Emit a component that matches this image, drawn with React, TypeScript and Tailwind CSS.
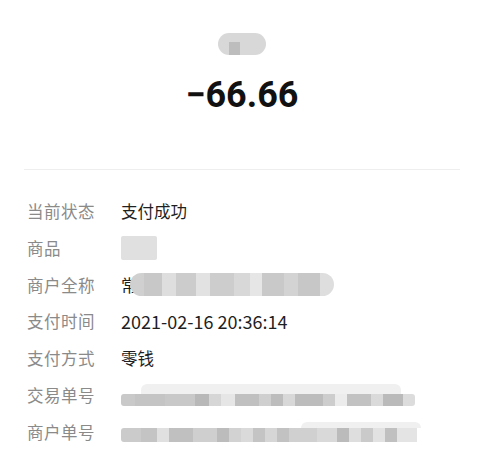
const font = { fontFamily: '"Noto Sans CJK SC", "Noto Sans", sans-serif' };

type Block = [number, string];

const tradeNo: Block[] = [
  [14, "#c9c9c9"], [30, "#c4c4c4"], [30, "#c8c8c8"], [14, "#b8b8b8"], [12, "#d6d6d6"],
  [14, "#e6e6e6"], [24, "#c0c0c0"], [12, "#cfcfcf"], [12, "#bdbdbd"], [12, "#d8d8d8"],
  [28, "#bcbcbc"], [12, "#cdcdcd"], [12, "#ececec"], [24, "#c2c2c2"], [12, "#dadada"],
  [20, "#bababa"], [12, "#dcdcdc"],
];

const merchantNo: Block[] = [
  [20, "#cbcbcb"], [16, "#c4c4c4"], [12, "#e0e0e0"], [24, "#c0c0c0"], [24, "#cfcfcf"],
  [12, "#bcbcbc"], [12, "#d2d2d2"], [12, "#dadada"], [12, "#c4c4c4"], [12, "#d6d6d6"],
  [12, "#c2c2c2"], [28, "#d0d0d0"], [20, "#d9d9d9"], [12, "#bbbbbb"], [12, "#dedede"],
  [12, "#cacaca"], [12, "#e2e2e2"], [12, "#c0c0c0"], [20, "#e4e4e4"],
];

const fullName: Block[] = [
  [14, "#d0d0d0"], [18, "#c8c8c8"], [14, "#dedede"], [20, "#cccccc"], [14, "#e2e2e2"],
  [24, "#cdcdcd"], [16, "#d8d8d8"], [12, "#e6e6e6"], [22, "#c9c9c9"], [14, "#d3d3d3"],
  [22, "#c7c7c7"], [14, "#dedede"],
];

function Mosaic({ blocks, h, rounded }: { blocks: Block[]; h: string; rounded?: boolean }) {
  return (
    <div className={`flex ${h} overflow-hidden ${rounded ? "rounded-full" : "rounded-[3px]"}`}>
      {blocks.map(([w, c], i) => (
        <div key={i} className="h-full shrink-0" style={{ width: w, backgroundColor: c }} />
      ))}
    </div>
  );
}

function Row({ label, children }: { label: string; children: React.ReactNode }) {
  return (
    <div className="flex h-[36.8px] items-center">
      <div className="w-[94px] shrink-0 text-[16.5px] tracking-[0.5px] text-[#8a8a8a]">{label}</div>
      <div className="flex items-center text-[16.5px] text-[#1f1f1f]">{children}</div>
    </div>
  );
}

export default function App() {
  return (
    <div className="h-[456px] w-[484px] overflow-hidden bg-white" style={font}>
      <div className="flex flex-col items-center pt-[33px]">
        <div className="relative h-[22px] w-[48px] rounded-full bg-[#d8d8d8]">
          <div className="absolute left-[11px] top-[9px] h-[13px] w-[11px] bg-[#bdbdbd]" />
        </div>
        <div
          className="mt-[18px] h-[44px] text-[36px] font-bold leading-[44px] text-[#111]"
          style={{ fontFamily: '"Roboto", "Noto Sans", sans-serif' }}
        >
          −66.66
        </div>
      </div>

      <div className="mx-[24px] mt-[52px] h-px bg-[#eeeeee]" />

      <div className="mt-[23px] pl-[27px]">
        <Row label="当前状态">支付成功</Row>
        <Row label="商品">
          <div className="h-[24px] w-[36px] rounded-[2px] bg-[#e0e0e0]" />
        </Row>
        <Row label="商户全称">
          <span>常</span>
          <div className="-ml-[8px]">
            <Mosaic blocks={fullName} h="h-[23px]" rounded />
          </div>
        </Row>
        <Row label="支付时间">
          <span className="text-[18px]">2021-02-16 20:36:14</span>
        </Row>
        <Row label="支付方式">零钱</Row>
        <Row label="交易单号">
          <div className="flex flex-col">
            <div className="ml-[20px] h-[10px] w-[260px] rounded-t-[6px] bg-[#f0f0f0]" />
            <Mosaic blocks={tradeNo} h="h-[12px]" />
          </div>
        </Row>
        <Row label="商户单号">
          <div className="flex flex-col">
            <div className="ml-[180px] h-[6px] w-[120px] rounded-t-[6px] bg-[#f0f0f0]" />
            <Mosaic blocks={merchantNo} h="h-[14px]" />
          </div>
        </Row>
      </div>
    </div>
  );
}
